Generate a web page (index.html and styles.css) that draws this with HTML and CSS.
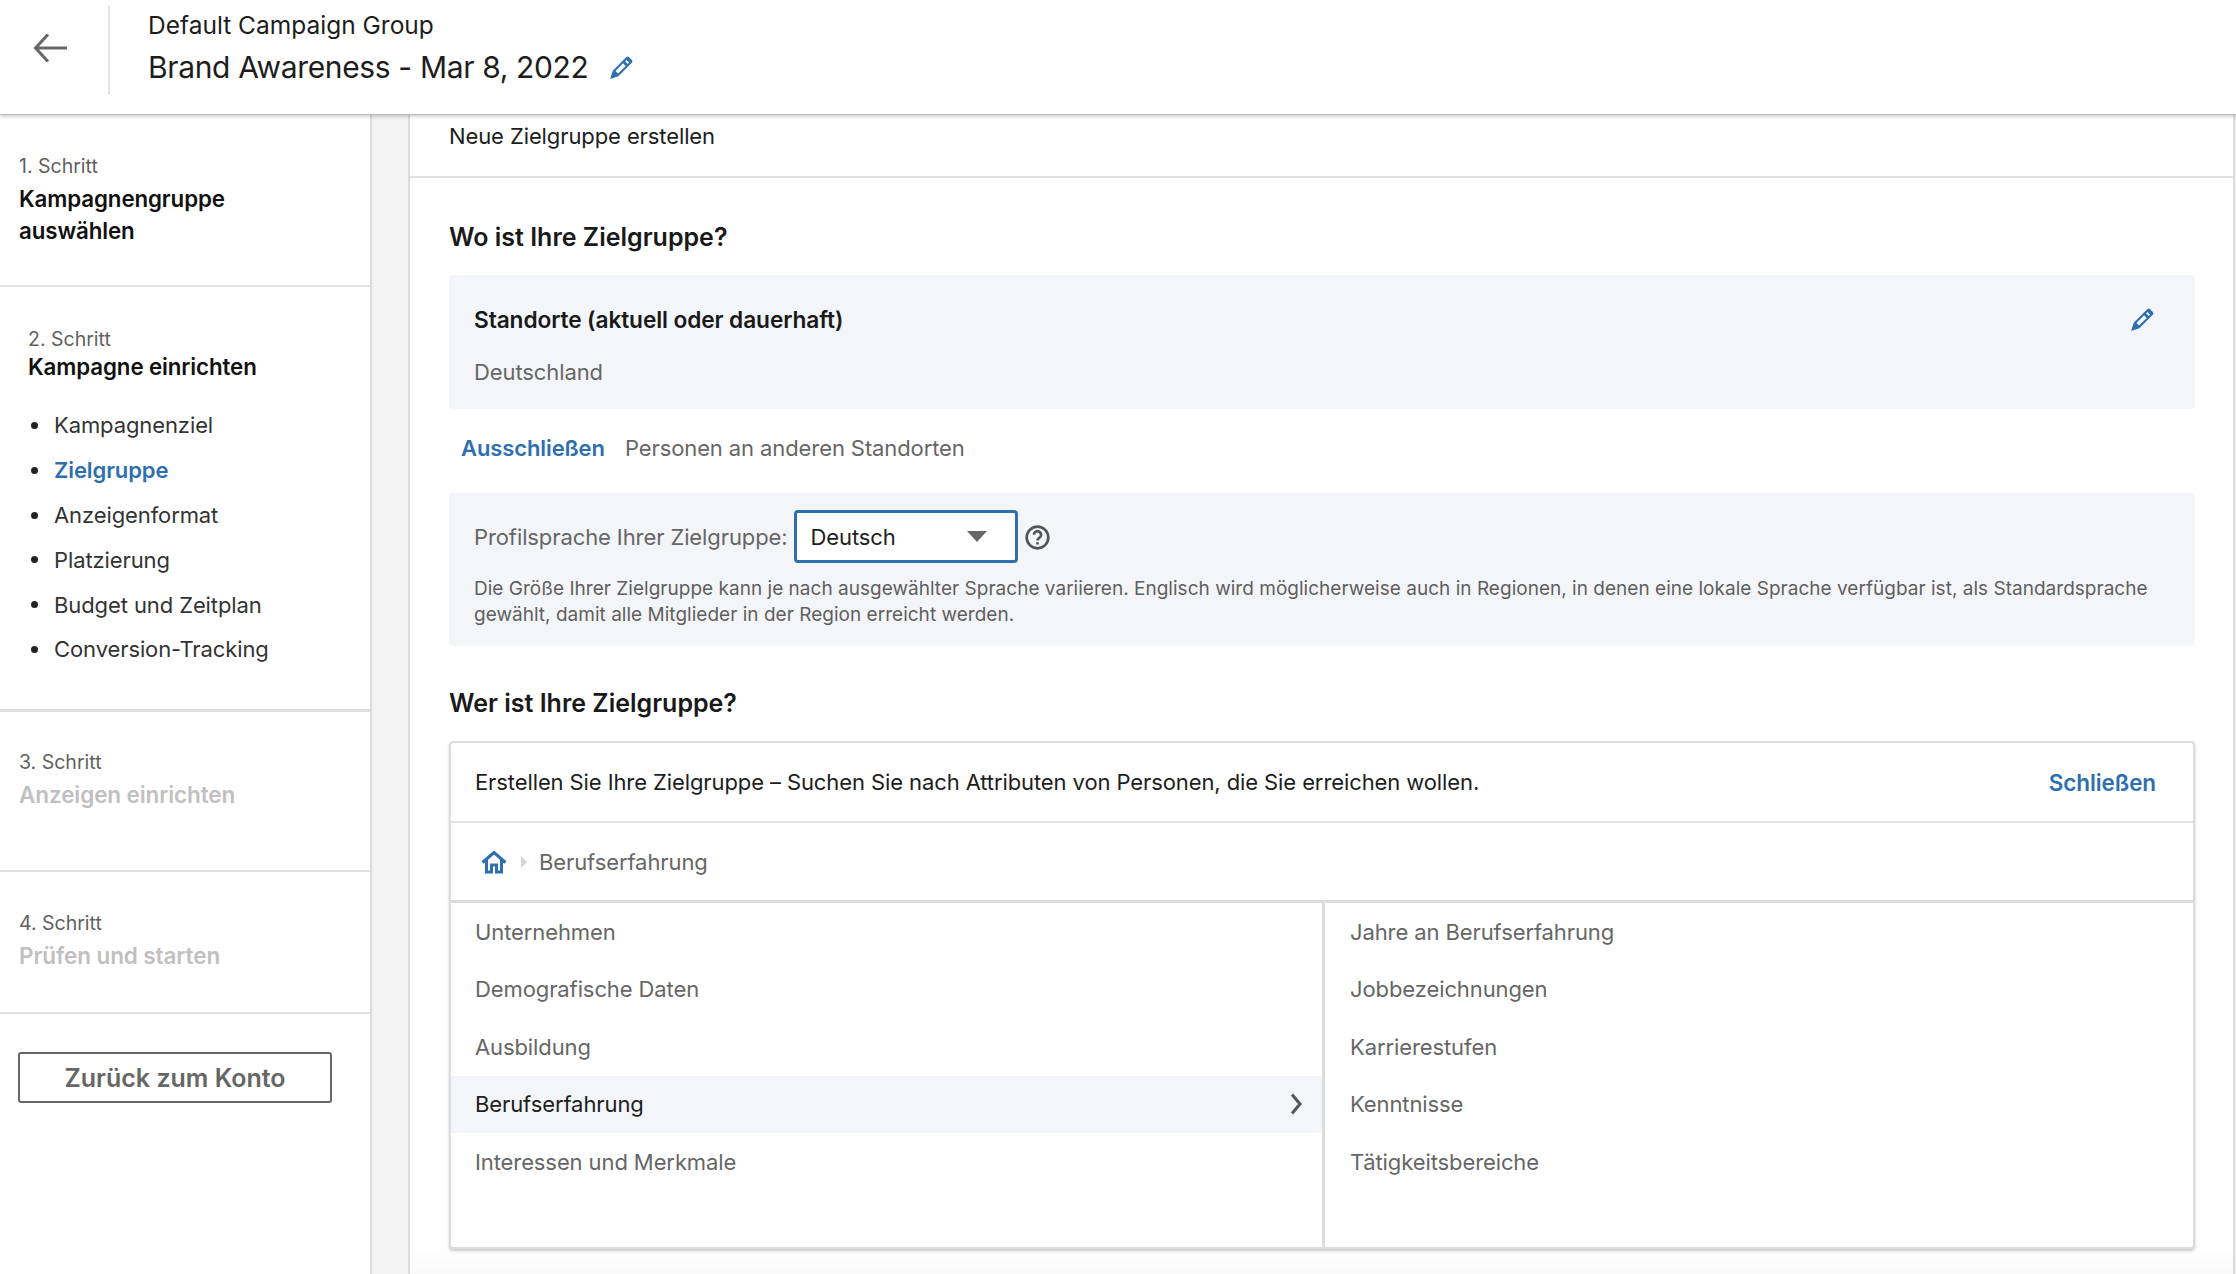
FILE: index.html
```html
<!DOCTYPE html>
<html lang="de">
<head>
  <meta charset="UTF-8">
  <title>Brand Awareness - Mar 8, 2022</title>
  <link rel="stylesheet" href="styles.css">
</head>
<body>
  <header class="topbar">
    <a class="back" aria-label="Zurück">
      <svg width="34" height="30" viewBox="0 0 34 30" fill="none" stroke="#666" stroke-width="3"><path d="M15 1.5 2.5 15 15 28.5M3 15h31"/></svg>
    </a>
    <div class="titles">
      <div class="group-name">Default Campaign Group</div>
      <div class="campaign-name">
        Brand Awareness - Mar 8, 2022
        <svg class="pencil" width="25" height="25" viewBox="0 0 24 24"><path fill-rule="evenodd" d="M1 23l2.600-8L16.500 2.100a2 2 0 0 1 2.800 0l2.600 2.600a2 2 0 0 1 0 2.800L9 20.400zM6.200 15.300l2.500 2.500L16 10.500 13.500 8zM15.400 6.100l2.500 2.500 1.400-1.400-2.500-2.500z"/></svg>
      </div>
    </div>
  </header>

  <div class="layout">
    <aside class="sidebar">
      <section class="step step-one">
        <div class="step-num">1. Schritt</div>
        <div class="step-title">Kampagnengruppe<br>auswählen</div>
      </section>
      <section class="step step-two">
        <div class="step-num">2. Schritt</div>
        <div class="step-title">Kampagne einrichten</div>
        <ul class="step-list">
          <li>Kampagnenziel</li>
          <li class="active">Zielgruppe</li>
          <li>Anzeigenformat</li>
          <li>Platzierung</li>
          <li>Budget und Zeitplan</li>
          <li>Conversion-Tracking</li>
        </ul>
      </section>
      <section class="step step-three">
        <div class="step-num">3. Schritt</div>
        <div class="step-title disabled">Anzeigen einrichten</div>
      </section>
      <section class="step step-four">
        <div class="step-num">4. Schritt</div>
        <div class="step-title disabled">Prüfen und starten</div>
      </section>
      <button class="back-btn">Zurück zum Konto</button>
    </aside>

    <main class="panel">
      <div class="panel-top">Neue Zielgruppe erstellen</div>
      <div class="panel-body">
        <h2 class="heading where">Wo ist Ihre Zielgruppe?</h2>
        <div class="box location">
          <div class="location-head">
            <strong>Standorte (aktuell oder dauerhaft)</strong>
            <svg class="pencil" width="25" height="25" viewBox="0 0 24 24"><path fill-rule="evenodd" d="M1 23l2.600-8L16.500 2.100a2 2 0 0 1 2.800 0l2.600 2.600a2 2 0 0 1 0 2.800L9 20.400zM6.200 15.300l2.500 2.500L16 10.500 13.500 8zM15.400 6.100l2.500 2.500 1.400-1.400-2.500-2.500z"/></svg>
          </div>
          <div class="location-value">Deutschland</div>
        </div>
        <div class="exclude"><a class="link">Ausschließen</a><span>Personen an anderen Standorten</span></div>
        <div class="box language">
          <div class="language-row">
            <span>Profilsprache Ihrer Zielgruppe:</span>
            <div class="select">Deutsch<i class="caret"></i></div>
            <svg class="help" width="27" height="27" viewBox="0 0 24 24" fill="none" stroke="#555" stroke-width="2.4"><circle cx="12" cy="12" r="9.6"/><path d="M8.800 9.600a3.200 3.200 0 1 1 4.800 2.800c-1 .6-1.600 1.100-1.600 2.200"/><path d="M12 16.200v2"/></svg>
          </div>
          <p class="language-note">Die Größe Ihrer Zielgruppe kann je nach ausgewählter Sprache variieren. Englisch wird möglicherweise auch in Regionen, in denen eine lokale Sprache verfügbar ist, als Standardsprache gewählt, damit alle Mitglieder in der Region erreicht werden.</p>
        </div>
        <h2 class="heading who">Wer ist Ihre Zielgruppe?</h2>
        <div class="card">
          <div class="card-head">
            <span>Erstellen Sie Ihre Zielgruppe – Suchen Sie nach Attributen von Personen, die Sie erreichen wollen.</span>
            <a class="link">Schließen</a>
          </div>
          <div class="crumbs">
            <svg width="26" height="24" viewBox="0 0 26 24" fill="none" stroke="#2e6fb0" stroke-width="3"><path d="M1.500 12.500 13 2.500l11.500 10"/><path d="M5.500 10v12h5v-7h5v7h5V10"/></svg>
            <i class="crumb-sep"></i>
            <span>Berufserfahrung</span>
          </div>
          <div class="columns">
            <ul class="col col-left">
              <li>Unternehmen</li>
              <li>Demografische Daten</li>
              <li>Ausbildung</li>
              <li class="selected">Berufserfahrung
                <svg width="12" height="22" viewBox="0 0 12 22" fill="none" stroke="#555" stroke-width="3"><path d="M2 1.500 10 11l-8 9.500"/></svg>
              </li>
              <li>Interessen und Merkmale</li>
            </ul>
            <ul class="col col-right">
              <li>Jahre an Berufserfahrung</li>
              <li>Jobbezeichnungen</li>
              <li>Karrierestufen</li>
              <li>Kenntnisse</li>
              <li>Tätigkeitsbereiche</li>
            </ul>
          </div>
        </div>
      </div>
    </main>
  </div>
</body>
</html>
```

FILE: styles.css
```css
* { box-sizing: border-box; }
html, body { height: 100%; }
body {
  margin: 0;
  overflow: hidden;
  display: flex;
  flex-direction: column;
  font-family: Inter, "Noto Sans", sans-serif;
  font-size: 22px;
  letter-spacing: -0.1px;
  color: #666;
  background: #f3f3f3;
}
a { cursor: pointer; }
ul { list-style: none; margin: 0; padding: 0; }

/* top bar */
.topbar {
  flex: none;
  height: 115px;
  display: flex;
  background: #fff;
  border-bottom: 1px solid #bdbdbd;
  box-shadow: 0 1px 4px rgba(0,0,0,0.25);
  position: relative;
  z-index: 2;
}
.back {
  width: 110px;
  height: 90px;
  margin-top: 5px;
  padding: 0 0 4px 33px;
  border-right: 2px solid #e4e4e4;
  display: flex;
  align-items: center;
}
.titles { padding: 9px 0 0 38px; color: #1d1d1d; }
.group-name { font-size: 24.500px; line-height: 32px; letter-spacing: 0; }
.campaign-name {
  font-size: 30px;
  letter-spacing: -0.35px;
  line-height: 40px;
  margin-top: 6px;
  display: flex;
  align-items: center;
  gap: 20px;
}
.pencil { fill: #2e6fb0; flex: none; }

.layout { flex: 1; display: flex; min-height: 0; }

/* left steps */
.sidebar {
  width: 372px;
  flex: none;
  background: #fff;
  border-right: 2px solid #dcdcdc;
}
.step { padding-left: 19px; border-bottom: 2px solid #e2e2e2; }
.step-num { font-size: 19.500px; line-height: 24px; color: #5f5f5f; letter-spacing: 0; }
.step-title { font-size: 22.300px; line-height: 32px; font-weight: 600; color: #111; }
.step-title.disabled { font-size: 22.500px; color: #c0c0c0; margin-top: 5px; }
.step-one { height: 172px; padding-top: 39px; }
.step-one .step-num { margin-bottom: 5px; }
.step-two { height: 425px; padding: 40px 0 0 28px; border-bottom: 3px solid #dedede; }
.step-three { height: 160px; padding-top: 38px; }
.step-four { height: 142px; padding-top: 39px; }
.step-list { margin-top: 20px; }
.step-list li {
  height: 44.800px;
  display: flex;
  align-items: center;
  padding-left: 26px;
  color: #333;
  position: relative;
}
.step-list li::before {
  content: "";
  position: absolute;
  left: 3px;
  top: 19px;
  width: 7px;
  height: 7px;
  border-radius: 50%;
  background: #222;
}
.step-list li.active { color: #2e6fb0; font-weight: 600; }
.back-btn {
  display: block;
  width: 314px;
  height: 51px;
  margin: 38px 0 0 18px;
  background: #fff;
  border: 2px solid #666;
  border-radius: 3px;
  font: 600 25px Inter, sans-serif;
  color: #666;
  cursor: pointer;
}

/* main panel */
.panel {
  width: 1827px;
  margin-left: 36px;
  flex: none;
  background: linear-gradient(#fff 1130px, #f9f9f9);
  border-left: 2px solid #dcdcdc;
  border-right: 2px solid #dcdcdc;
}
.panel-top {
  height: 63px;
  padding: 5px 0 0 39px;
  line-height: 32px;
  color: #1d1d1d;
  border-bottom: 2px solid #e2e2e2;
}
.panel-body { padding: 0 38px 0 39px; }
.heading { margin: 0; font-size: 25px; line-height: 32px; font-weight: 600; color: #191919; letter-spacing: 0; }
.heading.where { padding-top: 43px; }
.heading.who { padding-top: 41px; }
.box { background: #f3f5f8; border-radius: 4px; }
.location { height: 134px; margin-top: 22px; padding: 30px 40px 0 25px; }
.location-head { height: 28px; display: flex; justify-content: space-between; align-items: center; color: #191919; }
.location-head strong { font-weight: 600; font-size: 22.700px; }
.location-value { margin-top: 26px; }
.exclude { height: 84px; padding: 23px 0 0 12px; line-height: 32px; }
.exclude .link { margin-right: 20px; }
.link { color: #2e6fb0; font-weight: 600; }
.card-head .link { font-size: 22.500px; }
.language { height: 153px; padding: 17px 25px 0; }
.language-row { display: flex; align-items: center; }
.select {
  width: 224px;
  height: 53px;
  margin-left: 6px;
  padding: 0 14px;
  display: flex;
  align-items: center;
  justify-content: space-between;
  background: #fff;
  border: 3px solid #2e6fb0;
  border-radius: 4px;
  color: #1d1d1d;
}
.caret {
  margin-right: 14px;
  border-left: 10px solid transparent;
  border-right: 10px solid transparent;
  border-top: 11px solid #666;
}
.help { margin: 2px 0 0 6px; }
.language-note { margin: 13px 0 0; font-size: 19px; line-height: 26px; color: #5f5f5f; letter-spacing: 0.02px; }
.card {
  height: 508px;
  margin-top: 22px;
  background: #fff;
  border: 2px solid #dcdcdc;
  border-radius: 4px;
  box-shadow: 0 2px 3px rgba(0,0,0,0.2);
}
.card-head {
  height: 80px;
  padding: 0 37px 0 24px;
  display: flex;
  align-items: center;
  justify-content: space-between;
  color: #1d1d1d;
  border-bottom: 2px solid #e2e2e2;
}
.crumbs {
  height: 80px;
  padding: 0 0 0 30px;
  display: flex;
  align-items: center;
  border-bottom: 3px solid #dcdcdc;
}
.crumb-sep {
  margin: 0 12px 0 14px;
  border-left: 6px solid #d4d4d4;
  border-top: 6px solid transparent;
  border-bottom: 6px solid transparent;
}
.columns { display: flex; height: 344px; }
.col li {
  height: 57.500px;
  display: flex;
  align-items: center;
  justify-content: space-between;
  padding: 0 20px 0 24px;
}
.col-left { width: 874px; border-right: 3px solid #dcdcdc; }
.col-right { flex: 1; }
.col-right li { padding-left: 25px; }
.col li.selected { background: #f3f5f8; color: #1d1d1d; }
```
